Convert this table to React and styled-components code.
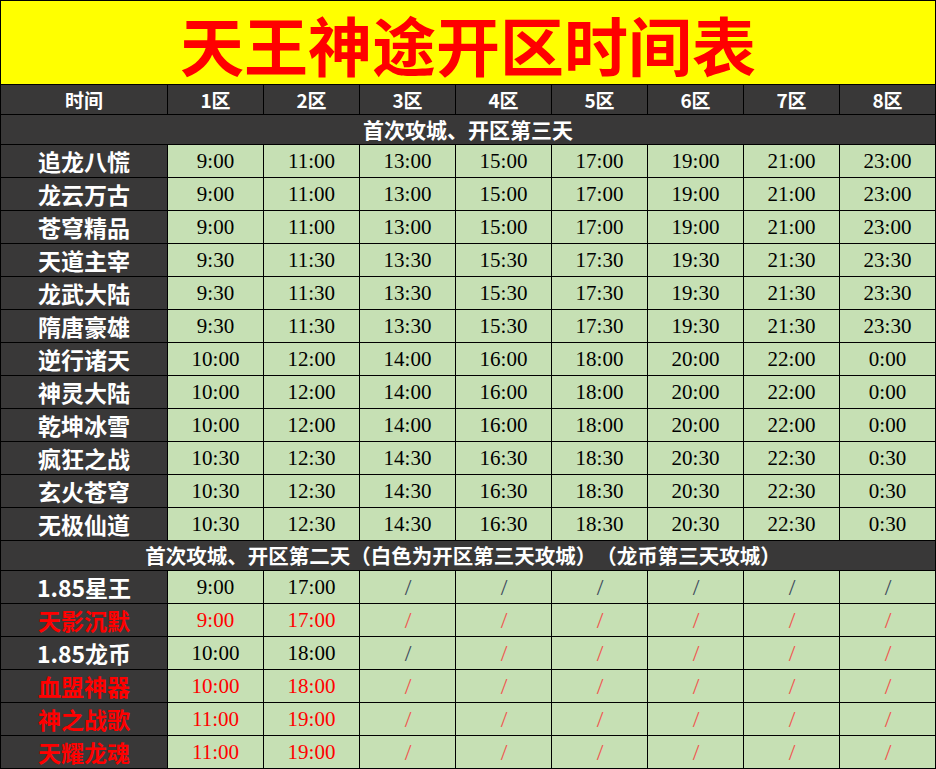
import React from "react";
import styled, { createGlobalStyle } from "styled-components";

const GlobalStyle = createGlobalStyle`
  html, body { margin: 0; padding: 0; background: #ffffff; }
  #root { width: 936px; }
  * { text-spacing-trim: space-all; }
`;

const CJK = `"Noto Sans CJK SC", "Noto Sans", sans-serif`;

const Sheet = styled.div`
  display: grid;
  grid-template-columns: 166px repeat(8, 95px);
  gap: 1px;
  padding: 1px;
  width: 936px;
  box-sizing: border-box;
  background: #000000;
`;

const TitleCell = styled.div`
  grid-column: 1 / -1;
  height: 83px;
  background: #ffff00;
  color: #ff0000;
  font-family: ${CJK};
  font-weight: 700;
  font-size: 64px;
  display: flex;
  align-items: center;
  justify-content: center;
  line-height: 80px;
  overflow: hidden;
`;

const HeadCell = styled.div`
  height: 29px;
  background: #393838;
  color: #ffffff;
  font-family: ${CJK};
  font-weight: 700;
  font-size: 19px;
  display: flex;
  align-items: center;
  justify-content: center;
  line-height: 1;
`;

const SectionCell = styled.div`
  grid-column: 1 / -1;
  height: 29px;
  background: #393838;
  color: #ffffff;
  font-family: ${CJK};
  font-weight: 700;
  font-size: ${(p) => p.$size || 20.5}px;
  display: flex;
  align-items: center;
  justify-content: center;
  line-height: 1;
  white-space: nowrap;
  padding-right: ${(p) => p.$shift || 0}px;
`;

const NameCell = styled.div`
  height: 32px;
  background: #393838;
  color: ${(p) => (p.$red ? "#ff0000" : "#ffffff")};
  font-family: ${CJK};
  font-weight: 700;
  font-size: 23px;
  display: flex;
  align-items: center;
  justify-content: center;
  line-height: 1;
  white-space: nowrap;
`;

const TimeCell = styled.div`
  height: 32px;
  background: #c6e0b4;
  color: ${(p) => (p.$red ? "#ff0000" : "#000000")};
  font-family: "Liberation Serif", "Times New Roman", serif;
  font-size: 21px;
  display: flex;
  align-items: center;
  justify-content: center;
  line-height: 1;
`;

const SlashCell = styled(TimeCell)`
  color: ${(p) => (p.$red ? "#f0564f" : "#3d4a5c")};
  font-size: 24px;
  padding-left: 1px;
`;

const zones = ["1区", "2区", "3区", "4区", "5区", "6区", "7区", "8区"];

const seq = (start) =>
  Array.from({ length: 8 }, (_, i) => {
    const [h, m] = start.split(":").map(Number);
    return `${(h + i * 2) % 24}:${String(m).padStart(2, "0")}`;
  });

const groups = [
  { names: ["追龙八慌", "龙云万古", "苍穹精品"], times: seq("9:00") },
  { names: ["天道主宰", "龙武大陆", "隋唐豪雄"], times: seq("9:30") },
  { names: ["逆行诸天", "神灵大陆", "乾坤冰雪"], times: seq("10:00") },
  { names: ["疯狂之战", "玄火苍穹", "无极仙道"], times: seq("10:30") },
];

const firstRows = groups.flatMap((g) =>
  g.names.map((n) => ({ name: n, times: g.times }))
);

const allRed = [true, true, true, true, true, true];

const secondRows = [
  { name: "1.85星王", red: false, times: ["9:00", "17:00"], slashRed: [false, false, false, false, false, false] },
  { name: "天影沉默", red: true, times: ["9:00", "17:00"], slashRed: allRed },
  { name: "1.85龙币", red: false, times: ["10:00", "18:00"], slashRed: [false, true, true, true, true, true] },
  { name: "血盟神器", red: true, times: ["10:00", "18:00"], slashRed: allRed },
  { name: "神之战歌", red: true, times: ["11:00", "19:00"], slashRed: allRed },
  { name: "天耀龙魂", red: true, times: ["11:00", "19:00"], slashRed: allRed },
];

export default function App() {
  return (
    <>
      <GlobalStyle />
      <Sheet>
        <TitleCell>天王神途开区时间表</TitleCell>

        <HeadCell>时间</HeadCell>
        {zones.map((z) => (
          <HeadCell key={z}>{z}</HeadCell>
        ))}

        <SectionCell $size={21}>首次攻城、开区第三天</SectionCell>

        {firstRows.map((r) => (
          <React.Fragment key={r.name}>
            <NameCell>{r.name}</NameCell>
            {r.times.map((t, i) => (
              <TimeCell key={i}>{t}</TimeCell>
            ))}
          </React.Fragment>
        ))}

        <SectionCell $shift={10}>
          首次攻城、开区第二天（白色为开区第三天攻城）（龙币第三天攻城）
        </SectionCell>

        {secondRows.map((r) => (
          <React.Fragment key={r.name}>
            <NameCell $red={r.red}>{r.name}</NameCell>
            {r.times.map((t, i) => (
              <TimeCell key={i} $red={r.red}>
                {t}
              </TimeCell>
            ))}
            {r.slashRed.map((sr, i) => (
              <SlashCell key={`s${i}`} $red={sr}>
                /
              </SlashCell>
            ))}
          </React.Fragment>
        ))}
      </Sheet>
    </>
  );
}
